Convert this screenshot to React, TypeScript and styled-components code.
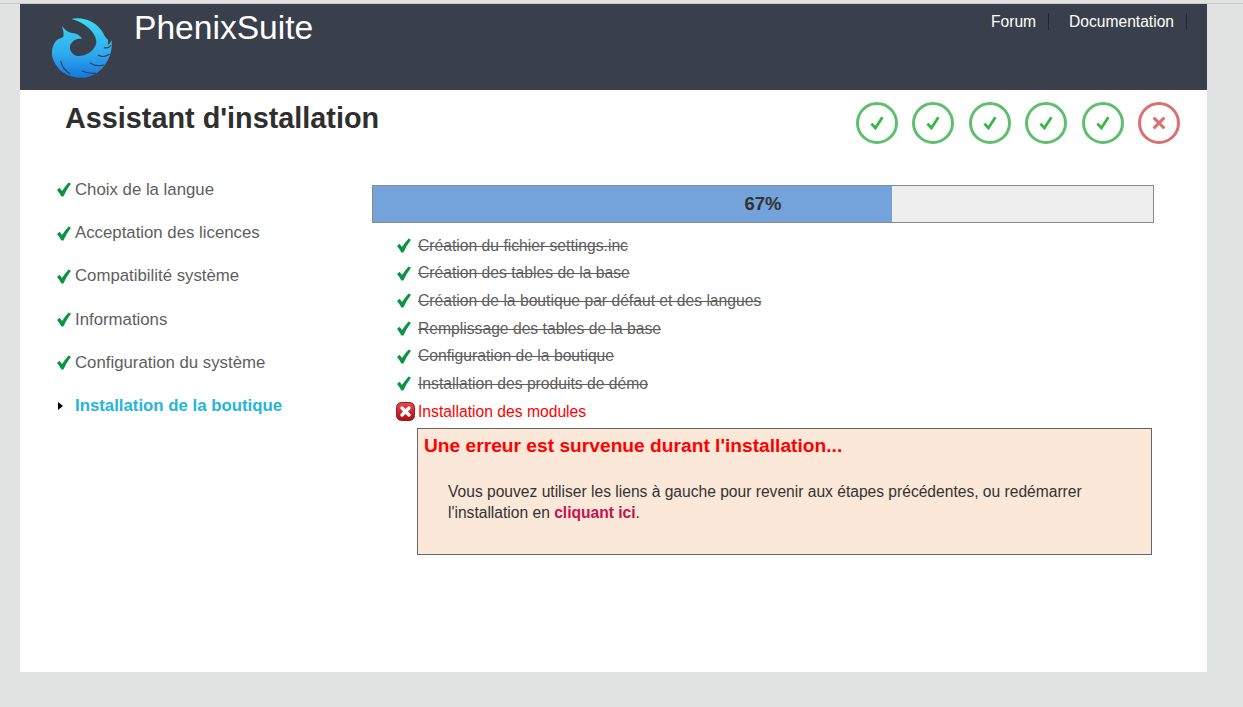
import styled, { createGlobalStyle } from "styled-components";

const GlobalStyle = createGlobalStyle`
  html, body {
    margin: 0;
    padding: 0;
    background: #e1e3e2;
    font-family: "Liberation Sans", Arial, sans-serif;
  }
`;

const steps = [
  "Choix de la langue",
  "Acceptation des licences",
  "Compatibilité système",
  "Informations",
  "Configuration du système",
];

const tasks = [
  "Création du fichier settings.inc",
  "Création des tables de la base",
  "Création de la boutique par défaut et des langues",
  "Remplissage des tables de la base",
  "Configuration de la boutique",
  "Installation des produits de démo",
];

const TickIcon = () => (
  <svg width="15" height="15" viewBox="-1 0 15 15">
    <path d="M0 8 L2.6 5.8 L5 9 Q8 4.4 11.6 0.4 L14 1.8 Q9.4 7.6 6.4 14.6 L4.4 14.6 Q2.6 11 0 8 Z" fill="#0b9444" />
  </svg>
);

const ErrorIcon = () => (
  <svg width="19" height="19" viewBox="0 0 19 19">
    <defs>
      <linearGradient id="errBg" x1="0" y1="0" x2="0" y2="1">
        <stop offset="0" stopColor="#e8484c" />
        <stop offset="1" stopColor="#a80f14" />
      </linearGradient>
    </defs>
    <rect x="0.5" y="0.5" width="18" height="18" rx="5" fill="url(#errBg)" stroke="#9c1a1e" />
    <path d="M6 6 L13 13 M13 6 L6 13" stroke="#fff" strokeWidth="3.4" strokeLinecap="round" />
  </svg>
);

const PhoenixLogo = () => (
  <svg width="60" height="61" viewBox="36 36 180 183">
    <defs>
      <linearGradient id="phoenix" x1="0" y1="0" x2="0" y2="1">
        <stop offset="0" stopColor="#3cdcf0" />
        <stop offset="0.6" stopColor="#2fa8ee" />
        <stop offset="1" stopColor="#1478e0" />
      </linearGradient>
    </defs>
    <path
      d="M95 42 C125 34 170 48 190 85 C193 92 197 100 203 103 C205 110 205 115 203 120 C208 118 212 112 215 106 C218 135 208 165 188 188 C170 208 145 220 118 218 C85 218 50 198 38 160 C32 138 38 118 50 106 C56 100 64 100 70 96 C72 84 70 74 65 62 C74 74 84 82 96 84 C108 84 120 90 127 102 C114 100 100 104 92 118 C86 130 92 146 108 152 C128 156 158 146 168 118 C176 88 135 52 95 42 Z"
      fill="url(#phoenix)"
    />
    <path
      d="M62 168 C66 186 76 198 90 206 M168 205 C152 206 138 204 126 198 M192 180 C176 184 162 182 150 174 M208 148 C196 156 184 156 174 150 M214 120 C208 128 200 130 192 128"
      stroke="#3a404b"
      strokeWidth="3.5"
      fill="none"
    />
  </svg>
);

const App = () => {
  return (
    <>
      <GlobalStyle />
      <Page>
        <Wrapper>
          <Header>
            <LogoBox>
              <PhoenixLogo />
            </LogoBox>
            <Brand>PhenixSuite</Brand>
            <TopNav>
              <NavLink>Forum</NavLink>
              <NavLink>Documentation</NavLink>
            </TopNav>
          </Header>

          <TitleRow>
            <Title>Assistant d'installation</Title>
            <StepBadges>
              {[0, 1, 2, 3, 4].map((i) => (
                <Badge key={i} $failed={false}>
                  <svg width="16" height="16" viewBox="0 0 16 16">
                    <path d="M2.4 8.6 L6.4 13 L13.4 2.2" fill="none" stroke="#39b54a" strokeWidth="2.8" />
                  </svg>
                </Badge>
              ))}
              <Badge $failed={true}>
                <svg width="14" height="14" viewBox="0 0 14 14">
                  <path d="M1.6 1.6 L12.4 12.4 M12.4 1.6 L1.6 12.4" fill="none" stroke="#d67272" strokeWidth="3" />
                </svg>
              </Badge>
            </StepBadges>
          </TitleRow>

          <Content>
            <Sidebar>
              {steps.map((s) => (
                <SideItem key={s}>
                  <SideIcon>
                    <TickIcon />
                  </SideIcon>
                  {s}
                </SideItem>
              ))}
              <SideItem $current>
                <SideIcon>
                  <Arrow />
                </SideIcon>
                Installation de la boutique
              </SideItem>
            </Sidebar>

            <Main>
              <ProgressBar>
                <ProgressFill style={{ width: "66.6%" }} />
                <ProgressLabel>67%</ProgressLabel>
              </ProgressBar>
              <TaskList>
                {tasks.map((t) => (
                  <TaskRow key={t}>
                    <TaskIcon>
                      <TickIcon />
                    </TaskIcon>
                    <DoneText>{t}</DoneText>
                  </TaskRow>
                ))}
                <TaskRow>
                  <TaskIcon>
                    <ErrorIcon />
                  </TaskIcon>
                  <FailedText>Installation des modules</FailedText>
                </TaskRow>
              </TaskList>
              <ErrorBox>
                <ErrorTitle>Une erreur est survenue durant l'installation...</ErrorTitle>
                <ErrorText>
                  Vous pouvez utiliser les liens à gauche pour revenir aux étapes précédentes, ou redémarrer
                  l'installation en <RestartLink>cliquant ici</RestartLink>.
                </ErrorText>
              </ErrorBox>
            </Main>
          </Content>
        </Wrapper>
      </Page>
    </>
  );
};

const Page = styled.div`
  height: 704px;
  overflow: hidden;
  border-top: 1px solid #c9cbca;
  margin-top: 3px;
  padding: 0 36px 0 20px;
  box-sizing: border-box;
`;

const Wrapper = styled.div`
  height: 668px;
  background: #fff;
`;

const Header = styled.header`
  height: 86px;
  background: #3a404b;
  display: flex;
  align-items: flex-start;
`;

const LogoBox = styled.div`
  margin: 13px 0 0 32px;
  width: 60px;
  height: 61px;
`;

const Brand = styled.div`
  margin: 4px 0 0 22px;
  color: #fff;
  font-size: 33.6px;
  line-height: 40px;
`;

const TopNav = styled.nav`
  margin-left: auto;
  margin-right: 20px;
  padding-top: 9px;
  display: flex;
`;

const NavLink = styled.a`
  color: #fff;
  font-size: 15.6px;
  line-height: 17px;
  padding-right: 12px;
  margin-left: 20px;
  border-right: 1px solid #23272e;
`;

const TitleRow = styled.div`
  display: flex;
  justify-content: space-between;
  padding: 10px 27px 0 45px;
  height: 75px;
  box-sizing: border-box;
`;

const Title = styled.h1`
  margin: 0;
  color: #2f2f2f;
  font-size: 28.8px;
  line-height: 36px;
  font-weight: bold;
`;

const StepBadges = styled.div`
  display: flex;
  gap: 14.4px;
  padding-top: 2px;
`;

const Badge = styled.div<{ $failed: boolean }>`
  width: 42px;
  height: 42px;
  box-sizing: border-box;
  border: 3px solid ${(p) => (p.$failed ? "#d67272" : "#5fbf6e")};
  border-radius: 50%;
  display: flex;
  align-items: center;
  justify-content: center;
`;

const Content = styled.div`
  display: flex;
`;

const Sidebar = styled.ul`
  list-style: none;
  margin: 0;
  padding: 3.3px 0 0 36px;
  width: 352px;
  box-sizing: border-box;
`;

const SideItem = styled.li<{ $current?: boolean }>`
  display: flex;
  align-items: center;
  height: 43.25px;
  font-size: 16.8px;
  color: ${(p) => (p.$current ? "#24b5d8" : "#5e5e5e")};
  font-weight: ${(p) => (p.$current ? "bold" : "normal")};
`;

const SideIcon = styled.span`
  width: 19px;
  display: flex;
  align-items: center;
`;

const Arrow = styled.i`
  margin-left: 2px;
  width: 0;
  height: 0;
  border-left: 5px solid #000;
  border-top: 4px solid transparent;
  border-bottom: 4px solid transparent;
`;

const Main = styled.main`
  width: 782px;
  padding-top: 20px;
`;

const ProgressBar = styled.div`
  position: relative;
  height: 38px;
  box-sizing: border-box;
  border: 1px solid #8a8a8a;
  background: #eeeeee;
`;

const ProgressFill = styled.div`
  height: 100%;
  background: #74a2da;
`;

const ProgressLabel = styled.span`
  position: absolute;
  top: 0;
  left: 0;
  right: 0;
  text-align: center;
  line-height: 36px;
  font-size: 18.5px;
  font-weight: bold;
  color: #333;
`;

const TaskList = styled.ul`
  list-style: none;
  margin: 8.7px 0 0;
  padding: 0 0 0 24px;
`;

const TaskRow = styled.li`
  display: flex;
  align-items: center;
  height: 27.7px;
  font-size: 15.68px;
`;

const TaskIcon = styled.span`
  width: 22px;
  display: flex;
  align-items: center;
`;

const DoneText = styled.span`
  color: #5e5e5e;
  text-decoration: line-through;
`;

const FailedText = styled.span`
  color: #ff0000;
`;

const ErrorBox = styled.div`
  margin: 2.3px 0 0 45px;
  width: 735px;
  height: 127px;
  box-sizing: border-box;
  border: 1px solid #666;
  background: #fbe8d9;
  padding: 6px 6px;
`;

const ErrorTitle = styled.div`
  color: #ff0000;
  font-weight: bold;
  font-size: 19.2px;
  line-height: 22px;
`;

const ErrorText = styled.p`
  margin: 24px 0 0 24px;
  width: 660px;
  color: #333;
  font-size: 15.6px;
  line-height: 21px;
`;

const RestartLink = styled.a`
  color: #c7114f;
  font-weight: bold;
`;

export default App;
